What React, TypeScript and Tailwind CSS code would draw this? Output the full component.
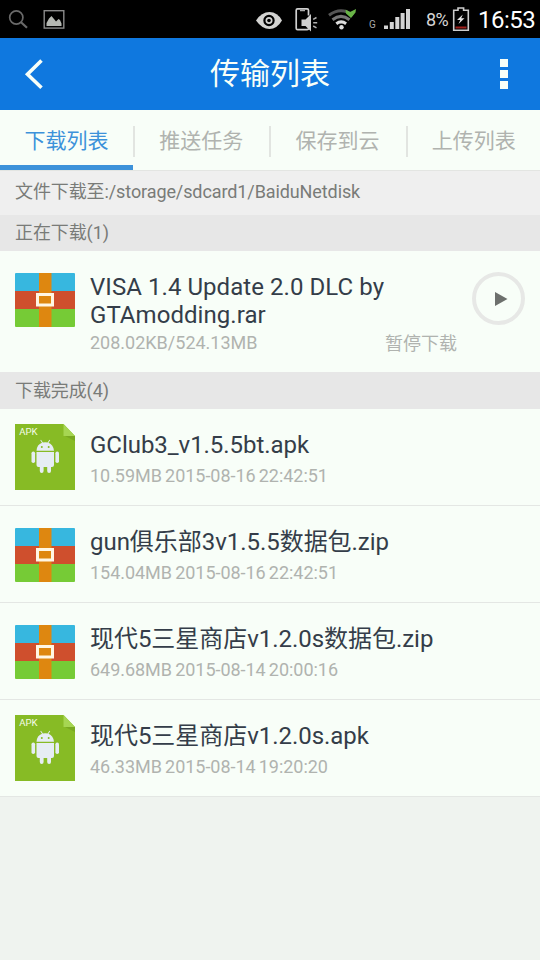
import React, { FC } from "react";
import clsx from "clsx";

type FileKind = "apk" | "archive";

type DownloadedFile = {
  name: string;
  info: string;
  kind: FileKind;
};

const tabs = ["下载列表", "推送任务", "保存到云", "上传列表"];

const files: DownloadedFile[] = [
  {
    name: "GClub3_v1.5.5bt.apk",
    info: "10.59MB 2015-08-16 22:42:51",
    kind: "apk",
  },
  {
    name: "gun俱乐部3v1.5.5数据包.zip",
    info: "154.04MB 2015-08-16 22:42:51",
    kind: "archive",
  },
  {
    name: "现代5三星商店v1.2.0s数据包.zip",
    info: "649.68MB 2015-08-14 20:00:16",
    kind: "archive",
  },
  {
    name: "现代5三星商店v1.2.0s.apk",
    info: "46.33MB 2015-08-14 19:20:20",
    kind: "apk",
  },
];

const StatusBar: FC = () => (
  <div className="flex h-[38px] items-center bg-black text-[#d6d6d6]">
    <svg className="ml-2 shrink-0" width="21" height="38" viewBox="0 0 21 38" fill="none" stroke="#6a6a6a" strokeWidth="1.7">
      <circle cx="8.3" cy="17.5" r="6.6" />
      <path d="M13 22.3l6 5.5" strokeWidth="2.2" />
    </svg>
    <svg className="ml-[14px] shrink-0" width="22" height="38" viewBox="0 0 22 38">
      <rect x="1.2" y="10.7" width="19.6" height="17.4" fill="none" stroke="#8b8b8b" strokeWidth="1.4" />
      <path d="M3.5 26v-3l2.5-4.5 2.5-2.5 2.5 3 2 2.5 2.5-2.5 1.5 1 1.5 3.5v2.5z" fill="#b5b8b3" />
    </svg>
    <svg className="ml-[191px] shrink-0" width="27" height="38" viewBox="0 0 27 38">
      <path d="M0 20.5Q5.5 12 13.5 12T26 20.5Q21 29 13.5 29T0 20.5z" fill="#d3d3d1" />
      <circle cx="13" cy="20.5" r="4.6" fill="#d3d3d1" stroke="#000" strokeWidth="2.2" />
      <circle cx="13" cy="20.5" r="1.8" fill="#000" />
    </svg>
    <svg className="ml-3 shrink-0" width="24" height="38" viewBox="0 0 24 38">
      <path d="M13.5 15.5V10.2q0-1.4-1.4-1.4H2.6q-1.4 0-1.4 1.4v18q0 1.4 1.4 1.4h9.5q1.4 0 1.4-1.4" fill="none" stroke="#d0d0d0" strokeWidth="1.7" />
      <path d="M5 10.5h5" stroke="#aaa" strokeWidth="1.5" />
      <path d="M6.5 19.5h4l5.5-5.5v17.5l-5.5-5.5h-4z" fill="#d0d0d0" />
      <path d="M18.2 19.3l3.3-1.8M18.2 22.7h4M18.2 26l3.3 1.8" stroke="#b0b0b0" strokeWidth="1.5" />
    </svg>
    <svg className="ml-[9px] shrink-0" width="30" height="38" viewBox="0 0 30 38" fill="none">
      <path d="M1 15.3q12-9 24 0" stroke="#555" strokeWidth="3" />
      <path d="M4.5 19.7q8.5-6.7 17 0" stroke="#777" strokeWidth="3" />
      <path d="M8.3 23.7q4.9-3.6 9.8 0" stroke="#ddd" strokeWidth="3" />
      <circle cx="13.5" cy="27.3" r="2.2" fill="#ddd" />
      <path d="M17.5 9.5l4.5 2.5 6-3-.5 3.5-4.5 5.5-5-4.5z" fill="#69b547" />
    </svg>
    <span className="ml-[11px] w-2 pt-[12px] text-[10px] leading-none text-[#a8a8a8]">G</span>
    <svg className="ml-[6px] shrink-0" width="28" height="38" viewBox="0 0 28 38" fill="#d4d4d4">
      <rect x="1" y="25.5" width="4" height="3.5" />
      <rect x="6.8" y="22" width="4" height="7" />
      <rect x="12.3" y="17" width="4" height="12" />
      <rect x="17.6" y="13" width="4" height="16" />
      <rect x="23" y="9" width="4" height="20" />
    </svg>
    <span className="ml-[15px] w-[24px] pt-[2px] text-[18px] leading-none tracking-[-0.6px]">8%</span>
    <svg className="ml-[2px] shrink-0" width="18" height="38" viewBox="0 0 18 38" fill="none">
      <path d="M1.7 10.3h4.3v-2.3h5.6v2.3h4.7v19.9H1.7z" stroke="#ccc" strokeWidth="1.6" />
      <path d="M10.8 14.5l-5.8 5.5h3.3l-1.8 4 6-5.7H9.2z" fill="#e4e4e4" />
      <path d="M3.5 27.5h11" stroke="#a01f1a" strokeWidth="2" />
    </svg>
    <span className="ml-[8px] pt-[2px] text-[24px] leading-none tracking-[-0.5px] text-white">16:53</span>
  </div>
);

const Header: FC = () => (
  <div className="flex h-[72px] items-center justify-between bg-[#0f78df] pr-8 pl-6">
    <svg width="20" height="32" viewBox="0 0 20 32" fill="none" stroke="#f8fff8" strokeWidth="3.6">
      <path d="M17.5 2.5L3.5 16.3l14 13.5" />
    </svg>
    <h1 className="mr-1 pb-px text-[30px] leading-none text-[#f8fff8]">传输列表</h1>
    <div className="flex flex-col gap-[3px]">
      <span className="size-2 bg-[#f8fff8]" />
      <span className="size-2 bg-[#f8fff8]" />
      <span className="size-2 bg-[#f8fff8]" />
    </div>
  </div>
);

const Tabs: FC = () => (
  <div className="flex h-[61px] border-b border-[#e3e5e2] bg-[#f8fef8]">
    {tabs.map((tab, index) => (
      <React.Fragment key={tab}>
        {index > 0 && <div className="mt-4 h-[31px] w-[2px] bg-[#e2e5e1]" />}
        <div
          className={clsx(
            "flex items-center justify-center border-b-[5px] pt-2 text-[21px]",
            index === 0 && "w-[133px] border-[#3d92da] text-[#3d92da]",
            index > 0 && "flex-1 border-transparent text-[#b0b3af]",
            (index === 1 || index === 2) && "pr-[2px]"
          )}
        >
          {tab}
        </div>
      </React.Fragment>
    ))}
  </div>
);

const ArchiveIcon: FC = () => (
  <svg className="shrink-0" width="60" height="54" viewBox="0 0 60 54">
    <path d="M0 18V1q0-1 1-1h58q1 0 1 1v17z" fill="#37b7df" />
    <path d="M0 18h60v18H0z" fill="#cf4f2d" />
    <path d="M0 36h60v17q0 1-1 1H1q-1 0-1-1z" fill="#76cb36" />
    <path d="M24 0h12.5v54H24z" fill="#de8710" />
    <rect x="22.5" y="21.5" width="15" height="10.5" fill="#de8710" stroke="#fff6e4" strokeWidth="3" />
  </svg>
);

const ApkIcon: FC = () => (
  <svg className="shrink-0" width="60" height="66" viewBox="0 0 60 66">
    <path d="M0 0h48.5L60 12v54H0z" fill="#87bb25" />
    <path d="M50 12h10v5z" fill="#79a921" />
    <path d="M48.5 0L60 12H48.5z" fill="#a6d652" />
    <text x="4.3" y="11" fontSize="9.6" fill="#f5fbe9">
      APK
    </text>
    <g fill="#e6edf4">
      <path d="M21.5 26.8q.5-6.3 5.500-8l-1.700-2.600.7-.5 1.900 2.800q2.400-.7 4.700 0l1.900-2.800.7.500-1.700 2.600q4.800 1.800 5.500 8z" />
      <path d="M21.5 28H39v13q0 2-2 2h-1v4q0 2-1.900 2t-1.900-2v-4h-3.600v4q0 2-1.900 2t-1.900-2v-4H23.5q-2 0-2-2z" />
      <rect x="16.5" y="27.5" width="3.6" height="11.5" rx="1.8" />
      <rect x="40.4" y="27.5" width="3.6" height="11.5" rx="1.8" />
    </g>
    <circle cx="26.8" cy="23" r="1" fill="#87bb25" />
    <circle cx="33.7" cy="23" r="1" fill="#87bb25" />
  </svg>
);

const SectionTitle: FC<{ title: string; className: string }> = ({ title, className }) => (
  <div className={clsx("flex items-center bg-[#e7e7e7] px-[15px] text-[18px] tracking-[-0.1px] text-[#797b78]", className)}>
    {title}
  </div>
);

const ActiveDownload: FC = () => (
  <div className="flex h-[121px] bg-[#f8fef8] pl-[15px]">
    <div className="pt-[22px]">
      <ArchiveIcon />
    </div>
    <div className="ml-[15px] w-[367px] pt-[22px]">
      <p className="w-[340px] text-[24px] leading-[28px] tracking-[0.06px] text-[#343d49]">
        VISA 1.4 Update 2.0 DLC by GTAmodding.rar
      </p>
      <div className="mt-[2px] flex justify-between text-[18px] leading-[24px] text-[#b0b3af]">
        <span>208.02KB/524.13MB</span>
        <span className="pt-px">暂停下载</span>
      </div>
    </div>
    <button className="mt-[21px] ml-[15px] flex size-[53px] items-center justify-center rounded-full border-4 border-[#e7e8e6]">
      <svg className="ml-[5px]" width="13" height="14" viewBox="0 0 13 14">
        <path d="M0 0l12.5 7L0 14z" fill="#6d706d" />
      </svg>
    </button>
  </div>
);

const FileRow: FC<{ file: DownloadedFile }> = ({ file }) => (
  <div className="flex h-[97px] items-center border-b border-[#e4e7e4] bg-[#f8fef8] pl-[15px]">
    <div className={clsx(file.kind === "archive" && "pt-[2px]")}>
      {file.kind === "apk" ? <ApkIcon /> : <ArchiveIcon />}
    </div>
    <div className="ml-[15px] pt-1 whitespace-nowrap">
      <p className="text-[24px] leading-[34px] tracking-[-0.04px] text-[#343d49]">{file.name}</p>
      <p className="text-[18px] leading-[28px] tracking-[-0.04px] text-[#b0b3af] [word-spacing:-1.2px]">
        {file.info}
      </p>
    </div>
  </div>
);

const App: FC = () => {
  return (
    <div className="h-[960px] w-[540px] overflow-hidden bg-[#eff3ef] font-[Roboto,'Noto_Sans_CJK_SC',sans-serif]">
      <StatusBar />
      <Header />
      <Tabs />
      <div className="flex h-[44px] items-center bg-[#efefef] px-[15px] pb-[3px] text-[18px] tracking-[-0.1px] text-[#797b78]">
        文件下载至:/storage/sdcard1/BaiduNetdisk
      </div>
      <SectionTitle title="正在下载(1)" className="h-[36px] pb-[2px]" />
      <ActiveDownload />
      <SectionTitle title="下载完成(4)" className="h-[37px]" />
      {files.map((file) => (
        <FileRow key={file.name} file={file} />
      ))}
    </div>
  );
};

export default App;
